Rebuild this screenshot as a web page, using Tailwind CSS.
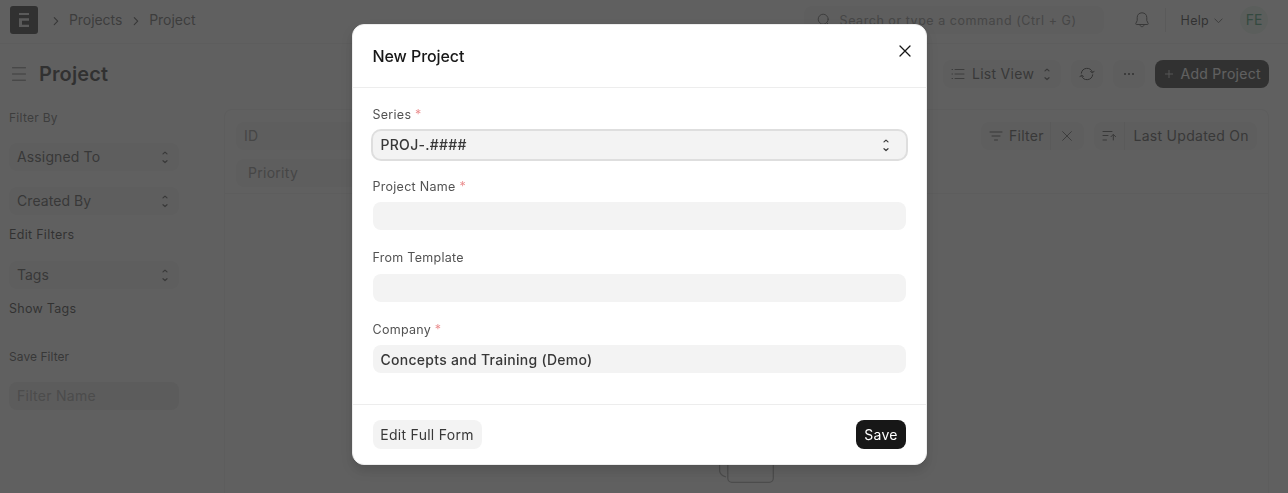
<!DOCTYPE html>
<html lang="en">
<head>
<meta charset="utf-8">
<title>Project</title>
<script src="https://cdn.jsdelivr.net/npm/@tailwindcss/browser@4"></script>
</head>
<body class="h-[493px] w-[1288px] overflow-hidden bg-white font-['Inter',sans-serif] text-sm font-[420] tracking-[0.02em] text-[#383838]">
<svg class="hidden">
  <symbol id="select" viewBox="0 0 16 16" fill="none" stroke="currentColor" stroke-width="1.2" stroke-linecap="round" stroke-linejoin="round"><path d="M6 4.900 8 3.100l2 1.800M6 11.700 8 13.500l2-1.800"/></symbol>
  <symbol id="close" viewBox="0 0 16 16" fill="none" stroke="currentColor" stroke-linecap="round"><path d="M3 3l10 10M13 3L3 13"/></symbol>
  <symbol id="chevron" viewBox="0 0 8 12" fill="none" stroke="currentColor" stroke-width="1.2" stroke-linecap="round" stroke-linejoin="round"><path d="M2.3 2.7 5.7 6.2 2.3 9.7"/></symbol>
</svg>

<header class="flex h-11 items-center border-b border-[#ededed] pl-[10px] pr-5 pb-[3px]">
  <svg class="size-7" viewBox="0 0 28 28"><rect width="28" height="28" rx="3" fill="#171717"/><path d="M9 6.900h10v2.200H9zM9 12.300h10v2.500h-7v4H19V21H9z" fill="#e2e2e2"/></svg>
  <svg class="ml-[14px] mt-0.5 h-3 w-2"><use href="#chevron"/></svg>
  <span class="ml-[9px] tracking-[-0.005em] text-[#525252]">Projects</span>
  <svg class="ml-[10px] mt-0.5 h-3 w-2"><use href="#chevron"/></svg>
  <span class="ml-[9px] tracking-[-0.003em] text-[#525252]">Project</span>
  <div class="ml-auto flex h-7 w-[300px] items-center rounded-lg bg-[#f3f3f3] pl-[13px] text-[12.5px] text-[#7c7c7c]">
    <svg class="size-[14px]" viewBox="0 0 14 14" fill="none" stroke="#525252" stroke-linecap="round"><circle cx="6.2" cy="6.2" r="5"/><path d="m10 10 3 3"/></svg>
    <span class="ml-[9px] whitespace-nowrap pt-0.5 tracking-[0.043em]">Search or type a command (Ctrl + G)</span>
  </div>
  <svg class="ml-[30px] size-4" viewBox="0 0 16 16" fill="none" stroke="#383838" stroke-linejoin="round"><path d="M8 .8c-3 0-4.8 2-4.8 4.800v3L1.800 11.500c-.2.500.1 1 .6 1h11.200c.5 0 .8-.5.6-1L12.800 8.600v-3C12.800 2.800 11 .8 8 .8ZM5.900 12.600c.2 1.400 1 2.100 2.100 2.100s1.900-.7 2.100-2.100"/></svg>
  <div class="ml-[15px] h-6 w-px bg-[#e2e2e2]"></div>
  <span class="ml-[15px] pt-0.5 text-[12.5px] text-[#171717]">Help</span>
  <svg class="ml-[5px] mt-0.5 h-[6px] w-[9px]" viewBox="0 0 9 6" fill="none" stroke="#525252" stroke-linecap="round" stroke-linejoin="round"><path d="M.8.9 4.500 4.700 8.200.9"/></svg>
  <div class="ml-[17px] flex size-7 items-center justify-center rounded-full bg-[#e4f5e9] tracking-normal text-[#278f5e]">FE</div>
</header>

<div class="flex h-[60px] items-center pl-3 pr-[19px]">
  <svg class="h-[14px] w-[14px]" viewBox="0 0 14 14" stroke="#525252" stroke-linecap="round"><path d="M.5.800h13M.5 7h13M.5 13.200h13"/></svg>
  <h1 class="ml-[13px] text-xl font-semibold tracking-[0.005em] text-[#171717]">Project</h1>
  <div class="ml-auto flex h-7 w-[118px] items-center rounded-lg bg-[#f3f3f3] pl-[8px]">
    <svg class="size-[14px]" viewBox="0 0 14 14" stroke="#525252" stroke-linecap="round"><path d="M4 2.500h9M4 7h9M4 11.500h9M1 2.500h.6M1 7h.6M1 11.500h.6"/></svg>
    <span class="ml-[7px]">List View</span>
    <svg class="ml-[5px] size-4"><use href="#select"/></svg>
  </div>
  <div class="ml-[10px] flex h-7 w-8 items-center justify-center rounded-lg bg-[#f3f3f3]">
    <svg class="size-4" viewBox="0 0 16 16" fill="none" stroke="#171717" stroke-linecap="round" stroke-linejoin="round"><path d="M2.300 7.200A5.800 5.800 0 0 1 13.400 6M13.700 8.800A5.800 5.800 0 0 1 2.600 10M15.100 5.200l-1.600 1.700-1.900-1.300M.9 10.800l1.600-1.700 1.900 1.300"/></svg>
  </div>
  <div class="ml-[10px] flex h-7 w-8 items-center justify-center gap-[2px] rounded-lg bg-[#f3f3f3]">
    <i class="size-[2px] rounded-full bg-[#171717]"></i><i class="size-[2px] rounded-full bg-[#171717]"></i><i class="size-[2px] rounded-full bg-[#171717]"></i>
  </div>
  <div class="ml-[10px] flex h-7 w-[114px] items-center rounded-lg bg-[#171717] pl-[10px] text-white">
    <svg class="size-2" viewBox="0 0 8 8" stroke="#c7c7c7"><path d="M4 0v8M0 4h8"/></svg>
    <span class="ml-[7.500px] whitespace-nowrap">Add Project</span>
  </div>
</div>

<main class="flex pl-[9px] pr-[19px]">
  <aside class="w-[170px] text-[12.5px]">
    <p class="mt-[5px] h-[18px] text-xs leading-[18px] text-[#525252]">Filter By</p>
    <div class="mt-4 flex h-7 items-center justify-between rounded-lg bg-[#f3f3f3] px-2 pr-[6px] text-sm tracking-[0.01em]">Assigned To<svg class="size-4"><use href="#select"/></svg></div>
    <div class="mt-4 flex h-7 items-center justify-between rounded-lg bg-[#f3f3f3] px-2 pr-[6px] text-sm tracking-[0.005em]">Created By<svg class="size-4"><use href="#select"/></svg></div>
    <p class="mt-[10px] h-5 leading-5 text-[#171717]">Edit Filters</p>
    <div class="mt-4 flex h-7 items-center justify-between rounded-lg bg-[#f3f3f3] px-2 pr-[6px] text-sm tracking-normal">Tags<svg class="size-4"><use href="#select"/></svg></div>
    <p class="mt-[10px] h-5 leading-5 text-[#171717]">Show Tags</p>
    <p class="mt-[29px] h-[18px] text-xs leading-[18px] tracking-[0.005em]">Save Filter</p>
    <div class="mt-4 flex h-7 items-center rounded-lg bg-[#e8e8e8] px-2 text-sm text-[#999]">Filter Name</div>
  </aside>
  <section class="ml-[45px] mt-[5px] h-[384px] w-[1045px] overflow-hidden rounded-t-lg border border-b-0 border-[#ededed]">
    <div class="flex h-[84px] justify-between border-b border-[#ededed] py-3 pl-[11px] pr-[11px]">
      <div class="space-y-[9px] text-[#7c7c7c]">
        <div class="flex h-7 w-[180px] items-center rounded-lg bg-[#f3f3f3] px-2">ID</div>
        <div class="flex h-7 w-[180px] items-center rounded-lg bg-[#f3f3f3] px-3">Priority</div>
      </div>
      <div class="flex h-7 gap-[10px]">
        <div class="flex w-[103px] items-center rounded-lg bg-[#f3f3f3] pl-[8px]">
          <svg class="h-3 w-[14px]" viewBox="0 0 14 12" stroke="#383838" stroke-linecap="round"><path d="M1 2h12M3 6h8M5.500 10h3"/></svg>
          <span class="ml-[6px]">Filter</span>
          <i class="ml-[6px] h-7 w-px bg-[#e2e2e2]"></i>
          <svg class="ml-[9px] size-[14px]"><use href="#close"/></svg>
        </div>
        <div class="flex w-[163px] items-center rounded-lg bg-[#f3f3f3] pl-[7px]">
          <svg class="size-4" viewBox="0 0 16 16" fill="none" stroke="#383838" stroke-linecap="round" stroke-linejoin="round"><path d="M2 3.500h9M2 7.500h5M2 12h3.500M12.300 12V6.700M10 8.700l2.300-2.300 2.300 2.300"/></svg>
          <i class="ml-[7px] h-7 w-px bg-[#e2e2e2]"></i>
          <span class="ml-[8.5px] whitespace-nowrap">Last Updated On</span>
        </div>
      </div>
    </div>
    <svg class="ml-[494px] mt-[257px] h-[32px] w-[56px]" viewBox="0 0 56 32" fill="none" stroke="#999" stroke-width="1.300"><path d="M.6 0v19.500q0 4.500 6.400 6.500"/><rect x="8.800" y="-10" width="45.500" height="41.300" rx="4"/></svg>
  </section>
</main>

<div class="fixed inset-0 bg-[#383838]/80"></div>

<div role="dialog" class="fixed left-[351.5px] top-6 flex h-[441px] w-[575px] flex-col rounded-xl border border-[#ededed] bg-white shadow-[0_0_1px_rgba(0,0,0,0.2),0_6px_12px_rgba(0,0,0,0.14)]">
  <div class="flex h-[63px] shrink-0 items-center justify-between border-b border-[#ededed] pl-5 pr-[13px]">
    <h2 class="text-base font-[550] tracking-[-0.005em] text-[#171717]">New Project</h2>
    <svg class="mb-[10px] size-4 text-[#171717]" stroke-width="1.300"><use href="#close"/></svg>
  </div>
  <form class="flex h-[317px] shrink-0 flex-col gap-[15.500px] border-b border-[#ededed] px-5 pt-[14.900px] text-[12.5px] text-[#525252]">
    <div><label class="block h-7 leading-[24px]">Series <span class="text-[#eb9091]">*</span></label>
      <div class="flex h-7 items-center justify-between rounded-lg bg-[#f3f3f3] pl-2 pr-3 text-sm font-medium tracking-[0.02em] text-[#383838] shadow-[0_0_0_2px_#dedede]">PROJ-.####<svg class="size-4"><use href="#select"/></svg></div></div>
    <div><label class="block h-7 leading-[26px]">Project Name <span class="text-[#eb9091]">*</span></label>
      <div class="h-7 rounded-lg bg-[#f3f3f3]"></div></div>
    <div><label class="block h-7 leading-[24px]">From Template</label>
      <div class="h-7 rounded-lg bg-[#f3f3f3]"></div></div>
    <div><label class="block h-7 leading-[26px]">Company <span class="text-[#eb9091]">*</span></label>
      <div class="flex h-7 items-center rounded-lg bg-[#f3f3f3] px-2 text-sm font-medium tracking-[0.02em] text-[#383838]"><span class="pt-px">Concepts and Training (Demo)</span></div></div>
  </form>
  <div class="flex flex-1 items-center justify-between px-5">
    <button type="button" class="h-[29px] w-[109px] whitespace-nowrap rounded-lg bg-[#f3f3f3] tracking-[0.02em]">Edit Full Form</button>
    <button type="button" class="h-[29px] w-[50px] rounded-lg bg-[#171717] pl-px tracking-[0.02em] text-white">Save</button>
  </div>
</div>
</body>
</html>
